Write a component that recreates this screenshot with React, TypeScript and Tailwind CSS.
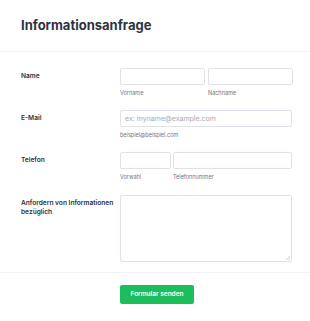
import React from "react";

const inputCls =
  "block h-[17px] rounded-[2px] border border-[#dfe2ea] bg-white px-[4px] text-[7px] outline-none placeholder:text-[#a3a9b6]";

function SubLabel({ children }: { children: React.ReactNode }) {
  return (
    <div className="mt-[4px] text-[5.5px] leading-[8px] text-[#6f7586]">{children}</div>
  );
}

function Row({
  label,
  className,
  children,
}: {
  label: React.ReactNode;
  className: string;
  children: React.ReactNode;
}) {
  return (
    <div className={`flex items-start ${className}`}>
      <div className="w-[99px] shrink-0 pt-[4px] text-[6.6px] font-semibold leading-[9px] text-[#2c3345]">
        {label}
      </div>
      <div className="w-[172px]">{children}</div>
    </div>
  );
}

export default function App() {
  return (
    <div className="h-[321px] w-[310px] bg-white font-['Inter',sans-serif] text-[#2c3345]">
      {/* Header */}
      <div className="h-[52px] border-b border-[#f1f2f6] px-[21px] pt-[17px]">
        <h1 className="text-[13px] font-bold leading-[17px]">
          Informationsanfrage
        </h1>
      </div>

      {/* Fields */}
      <div className="border-b border-[#f1f2f6] px-[21px] pt-[16px] pb-[10px]">
        <Row label="Name" className="h-[42px]">
          <div className="flex gap-[3px]">
            <div className="w-[85px]">
              <input className={`${inputCls} w-[85px]`} />
              <SubLabel>Vorname</SubLabel>
            </div>
            <div className="w-[85px]">
              <input className={`${inputCls} w-[85px]`} />
              <SubLabel>Nachname</SubLabel>
            </div>
          </div>
        </Row>

        <Row label="E-Mail" className="h-[42px]">
          <input
            className={`${inputCls} w-[172px]`}
            placeholder="ex: myname@example.com"
          />
          <SubLabel>beispiel@beispiel.com</SubLabel>
        </Row>

        <Row label="Telefon" className="h-[43px]">
          <div className="flex gap-[2px]">
            <div className="w-[51px]">
              <input className={`${inputCls} w-[51px]`} />
              <SubLabel>Vorwahl</SubLabel>
            </div>
            <div className="w-[119px]">
              <input className={`${inputCls} w-[119px]`} />
              <SubLabel>Telefonnummer</SubLabel>
            </div>
          </div>
        </Row>

        <Row
          label={
            <>
              <span className="whitespace-nowrap">Anfordern von Informationen</span>
              <br />
              bezüglich
            </>
          }
          className=""
        >
          <div className="relative">
            <textarea className="block h-[67px] w-[172px] resize-none rounded-[2px] border border-[#dfe2ea] bg-white outline-none" />
            {/* resize grip */}
            <svg
              className="absolute right-[2px] bottom-[2px]"
              width="4"
              height="4"
              viewBox="0 0 4 4"
            >
              <path d="M4 0 L0 4 M4 2 L2 4" stroke="#c4c8d2" strokeWidth="0.8" />
            </svg>
          </div>
        </Row>
      </div>

      {/* Submit */}
      <div className="pt-[12px] pl-[120px]">
        <button className="flex h-[19px] w-[74px] items-center justify-center rounded-[2px] bg-[#1bbd5c] text-[6.5px] font-semibold text-white">
          Formular senden
        </button>
      </div>
    </div>
  );
}
